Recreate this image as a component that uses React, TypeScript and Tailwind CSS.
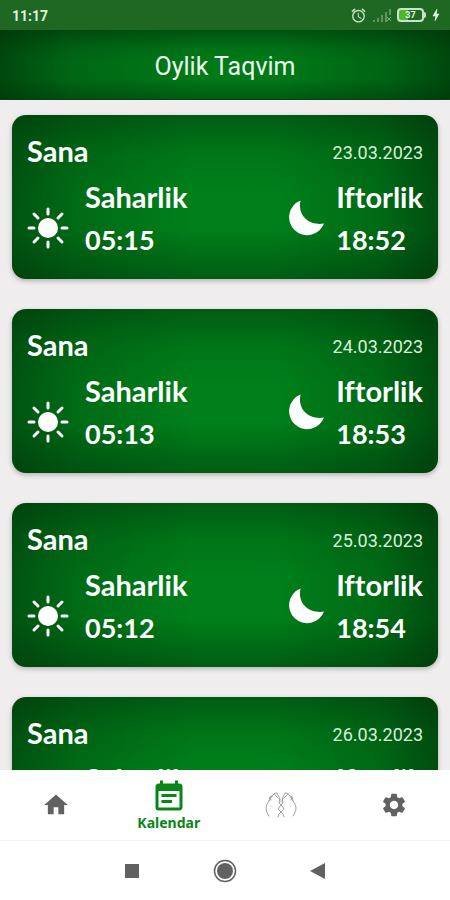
import React, { useState } from 'react';
import { MdAlarm, MdBolt, MdEventNote, MdHome, MdSettings } from 'react-icons/md';

type TabId = 'home' | 'calendar' | 'prayer' | 'settings';

interface Day {
  date: string;
  saharlik: string;
  iftorlik: string;
}

const DAYS: Day[] = [
  { date: '23.03.2023', saharlik: '05:15', iftorlik: '18:52' },
  { date: '24.03.2023', saharlik: '05:13', iftorlik: '18:53' },
  { date: '25.03.2023', saharlik: '05:12', iftorlik: '18:54' },
  { date: '26.03.2023', saharlik: '05:10', iftorlik: '18:55' },
];

const SunIcon = () => (
  <svg viewBox="0 0 42 42" className="h-[42px] w-[42px] shrink-0" aria-hidden="true">
    <circle cx="21" cy="21" r="10" fill="white" />
    <g stroke="white" strokeWidth="3" strokeLinecap="round">
      <path d="M21 2v5M21 35v5M2 21h5M35 21h5" />
      <path d="M7 7l4 4M31 31l4 4M7 35l4-4M31 11l4-4" />
    </g>
  </svg>
);

const MoonIcon = () => (
  <svg viewBox="0 0 36 36" className="h-9 w-9 shrink-0" aria-hidden="true">
    <path d="M12.500 0.500A18 18 0 1 0 36 23.500C23 26 9 17 12.500 0.500Z" fill="white" />
  </svg>
);

const HandsIcon = () => (
  <svg viewBox="0 0 32 26" className="h-[26px] w-8" fill="none" stroke="#a0a0a0" strokeLinecap="round" strokeLinejoin="round" aria-hidden="true">
    <path d="M4 24c-1-2-3-4-3-8 0-3 2-5 3-7l1-4 2-1" />
    <path d="M28 24c1-2 3-4 3-8 0-3-2-5-3-7l-1-4-2-1" />
    <path d="M4 9l3-5 3-3 2 0 2 4 1 5M28 9l-3-5-3-3-2 0-2 4-1 5" />
    <path d="M9 2l4 4M23 2l-4 4M5 5l1 3M27 5l-1 3" />
    <path d="M15 7l-1 4 3 3 2 3-3 3-2 2-1 3M17 7l1 4-3 3-2 3 3 3 2 2 1 3" />
    <path d="M6 14l1 1M26 14l-1 1" strokeWidth="0.500" />
  </svg>
);

const SignalIcon = () => (
  <svg viewBox="0 0 18 13" className="h-[13px] w-[18px]" aria-hidden="true">
    <path d="M1 11v2M5 9v4M9 6v7M13 3v10M17 0v6" stroke="#5f9361" strokeWidth="2" />
    <path d="M14 8l4 4M18 8l-4 4" stroke="#7fab80" />
  </svg>
);

const StatusBar = () => (
  <div className="flex h-[30px] shrink-0 items-center justify-between bg-[#1f6823] pr-1.5 pl-3 text-[#e0f2e0]">
    <span className="pt-0.5 text-sm font-bold">11:17</span>
    <div className="flex items-center">
      <MdAlarm className="mr-1.5 h-[17px] w-[17px] text-[#c2e0c2]" />
      <SignalIcon />
      <div className="ml-1.5 flex items-center">
        <div className="flex h-3.5 w-[27px] items-center justify-center rounded-sm border-2 border-[#c8e4c8] bg-[linear-gradient(90deg,#4fb62c_37%,transparent_37%)]">
          <span className="text-[9px] leading-none font-bold">37</span>
        </div>
        <div className="h-1.5 w-0.5 rounded-r bg-[#c8e4c8]" />
      </div>
      <MdBolt className="ml-0.5 h-4 w-4" />
    </div>
  </div>
);

const DayCard: React.FC<{ day: Day }> = ({ day }) => (
  <article className="h-[164px] shrink-0 rounded-[14px] bg-[#007f1a] bg-[linear-gradient(180deg,rgba(0,45,8,0.42),rgba(0,45,8,0.12)_22%,transparent_45%,transparent_70%,rgba(0,45,8,0.42)),linear-gradient(90deg,rgba(0,45,8,0.52),rgba(0,45,8,0.25)_15%,transparent_42%,transparent_62%,rgba(0,45,8,0.25)_86%,rgba(0,45,8,0.6))] px-[15px] pt-5 font-['Lato',sans-serif] text-white shadow-[0_2px_5px_rgba(0,0,0,0.25)]">
    <div className="flex items-center justify-between">
      <h2 className="text-[29px] leading-8 font-bold">Sana</h2>
      <time className="pt-1 font-['Roboto',sans-serif] text-lg leading-none text-[#d9f0da]">{day.date}</time>
    </div>
    <div className="mt-2 flex justify-between leading-[43px] font-bold">
      <div className="flex items-center gap-4">
        <div className="pt-5">
          <SunIcon />
        </div>
        <div>
          <h3 className="text-[29px]">Saharlik</h3>
          <p className="text-[27px]">{day.saharlik}</p>
        </div>
      </div>
      <div className="flex items-center gap-3">
        <MoonIcon />
        <div>
          <h3 className="text-[29px] [font-variant-ligatures:none]">Iftorlik</h3>
          <p className="text-[27px]">{day.iftorlik}</p>
        </div>
      </div>
    </div>
  </article>
);

const TABS: { id: TabId; label: string; icon: React.ReactNode }[] = [
  { id: 'home', label: 'Asosiy', icon: <MdHome className="h-7 w-7" /> },
  { id: 'calendar', label: 'Kalendar', icon: <MdEventNote className="h-9 w-9" /> },
  { id: 'prayer', label: 'Duolar', icon: <HandsIcon /> },
  { id: 'settings', label: 'Sozlamalar', icon: <MdSettings className="h-7 w-7" /> },
];

const App: React.FC = () => {
  const [activeTab, setActiveTab] = useState<TabId>('calendar');

  return (
    <div className="flex h-screen flex-col bg-[#efedee] font-['Roboto',sans-serif]">
      <StatusBar />
      <header className="flex h-[70px] shrink-0 items-center justify-center border-b border-[#00450c] bg-[#007a18] bg-[linear-gradient(180deg,rgba(0,45,8,0.5),rgba(0,45,8,0.1)_28%,transparent_45%,transparent_70%,rgba(0,45,8,0.4)),linear-gradient(90deg,rgba(0,45,8,0.65),rgba(0,45,8,0.25)_16%,transparent_45%,transparent_62%,rgba(0,45,8,0.3)_86%,rgba(0,45,8,0.65))] pt-1">
        <h1 className="text-[25px] text-[#eef9ee]">Oylik Taqvim</h1>
      </header>

      {/* Day list */}
      <main className="flex min-h-0 flex-1 flex-col gap-[30px] overflow-hidden px-3 pt-[15px]">
        {DAYS.map((day) => (
          <DayCard key={day.date} day={day} />
        ))}
      </main>

      {/* App tabs */}
      <nav className="z-10 grid h-[71px] shrink-0 grid-cols-4 border-b border-[#f3f3f3] bg-white">
        {TABS.map((tab) => (
          <button
            key={tab.id}
            type="button"
            aria-label={tab.label}
            onClick={() => setActiveTab(tab.id)}
            className={`flex flex-col items-center justify-center ${tab.id === activeTab ? 'text-[#078717]' : 'text-[#616161]'}`}
          >
            {tab.icon}
            {tab.id === activeTab && (
              <span className="font-['Noto_Sans',sans-serif] text-sm leading-4 font-bold">{tab.label}</span>
            )}
          </button>
        ))}
      </nav>

      {/* System buttons */}
      <div className="flex h-[59px] shrink-0 items-center justify-center gap-[70px] bg-white">
        <button type="button" aria-label="Recent apps" className="p-0.5">
          <svg viewBox="0 0 18 18" className="h-[18px] w-[18px]">
            <rect x="2" y="2" width="14" height="14" fill="#616161" />
          </svg>
        </button>
        <button type="button" aria-label="Home">
          <svg viewBox="0 0 24 24" className="h-6 w-6">
            <circle cx="12" cy="12" r="10.500" fill="none" stroke="#616161" strokeWidth="1.500" />
            <circle cx="12" cy="12" r="8" fill="#616161" />
          </svg>
        </button>
        <button type="button" aria-label="Back" className="p-0.5">
          <svg viewBox="0 0 18 18" className="h-[18px] w-[18px]">
            <path d="M1 9L16 1V17Z" fill="#616161" />
          </svg>
        </button>
      </div>
    </div>
  );
};

export default App;
